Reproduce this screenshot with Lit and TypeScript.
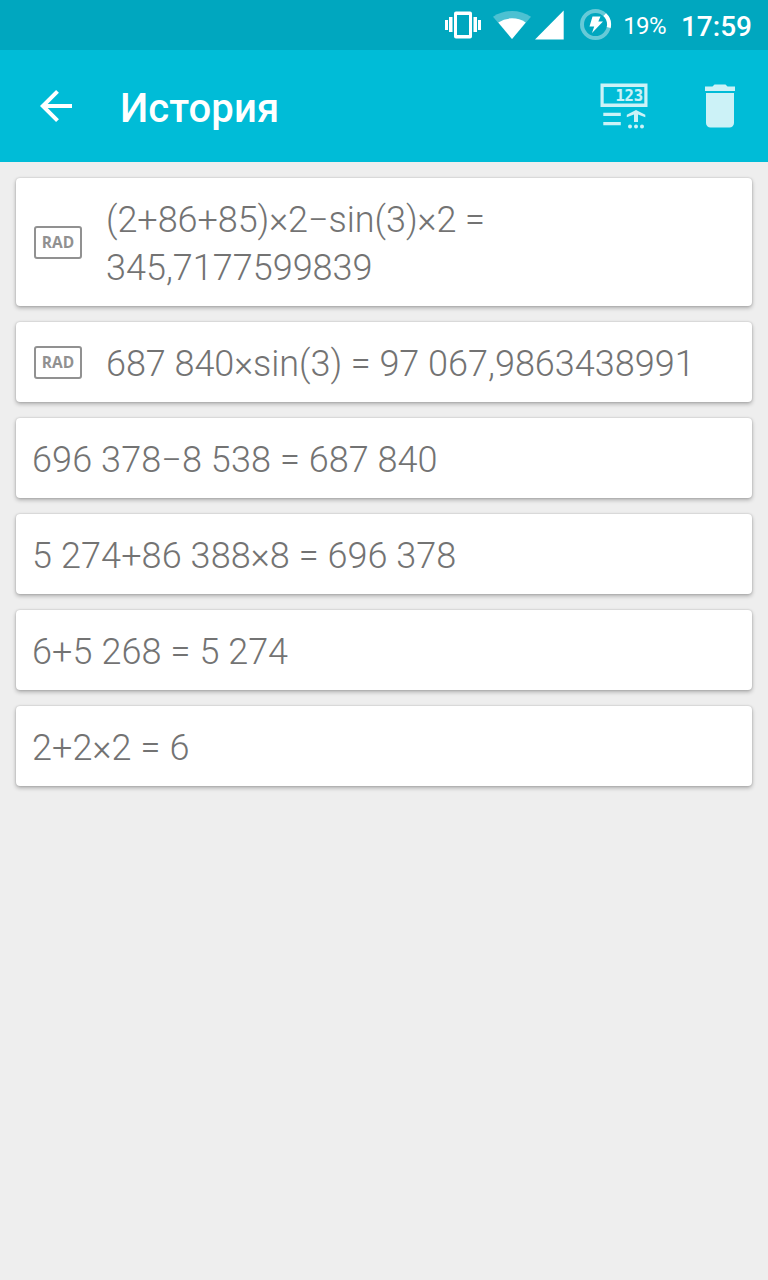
import { LitElement, html, css, nothing } from "lit";
import { customElement, property } from "lit/decorators.js";
import { classMap } from "lit/directives/class-map.js";

interface Entry {
  expression: string;
  result: string;
  rad?: boolean;
}

const ENTRIES: Entry[] = [
  { expression: "(2+86+85)×2−sin(3)×2", result: "345,7177599839", rad: true },
  { expression: "687 840×sin(3)", result: "97 067,9863438991", rad: true },
  { expression: "696 378−8 538", result: "687 840" },
  { expression: "5 274+86 388×8", result: "696 378" },
  { expression: "6+5 268", result: "5 274" },
  { expression: "2+2×2", result: "6" },
];

@customElement("status-bar")
class StatusBar extends LitElement {
  static styles = css`
    :host {
      display: flex;
      align-items: center;
      justify-content: flex-end;
      height: 50px;
      padding-right: 16px;
      background: #00a7bf;
      color: #fff;
    }
    svg { display: block; flex: none; }
    .vibrate { margin-right: 12px; }
    .wifi { margin-right: 4px; }
    .signal { margin-right: 16px; }
    .battery { margin-right: 11px; }
    .percent { font-size: 24px; letter-spacing: -0.6px; margin-right: 15px; padding-top: 2px; height: 48px; display: flex; align-items: center; }
    .clock { font-size: 28px; font-weight: 500; padding-top: 2px; height: 48px; display: flex; align-items: center; }
  `;

  render() {
    return html`
      <svg class="vibrate" width="36" height="50" viewBox="445 0 36 50" fill="#fff">
        <path d="M445 20h3v10h-3zM449 17h3.500v15H449zM473.500 17h3.500v15h-3.500zM478 20h3v10h-3z" />
        <path fill-rule="evenodd" d="M456 11.500h14a2 2 0 0 1 2 2v23a2 2 0 0 1-2 2h-14a2 2 0 0 1-2-2v-23a2 2 0 0 1 2-2zM457 15v20h12V15z" />
      </svg>
      <svg class="wifi" width="38" height="50" viewBox="493 0 38 50" fill="#fff">
        <path opacity=".3" d="M512 39L493 16.700Q502 11 512 11T531 16.700Z" />
        <path d="M512 39L498.300 22.500Q504.500 18.300 512 18.300T525.700 22.500Z" />
      </svg>
      <svg class="signal" width="29" height="50" viewBox="535 0 29 50" fill="#fff">
        <path d="M535 39.500L563.700 10.500V39.500Z" />
      </svg>
      <svg class="battery" width="32" height="50" viewBox="580 0 32 50">
        <circle cx="595.500" cy="24.500" r="13.500" fill="none" stroke="#fff" stroke-opacity=".4" stroke-width="4" />
        <path d="M604.700 14.600A13.500 13.500 0 0 1 608.700 27.500" fill="none" stroke="#fff" stroke-width="4" />
        <path fill="#fff" d="M592.500 16.500H600.500L598.300 21.500H603L592 33L594.200 26.500H589.500Z" />
      </svg>
      <span class="percent">19%</span>
      <span class="clock">17:59</span>
    `;
  }
}

@customElement("app-toolbar")
class AppToolbar extends LitElement {
  static styles = css`
    :host {
      display: flex;
      align-items: center;
      height: 112px;
      padding: 0 32px 0 40px;
      background: #00bcd7;
      color: #fff;
    }
    svg { display: block; flex: none; }
    .title {
      flex: 1;
      margin: 6px 0 0 48px;
      font-size: 40px;
      font-weight: 500;
      line-height: 48px;
      letter-spacing: 0.1px;
    }
    .actions { display: flex; gap: 56px; }
    .digits { font: bold 15.5px "DejaVu Sans Mono", monospace; stroke: #ccf2f7; stroke-width: 0.15px; }
  `;

  render() {
    return html`
      <svg width="32" height="112" viewBox="40 50 32 112">
        <path d="M72 106H43M57.500 91.300L42.800 106L57.500 120.700" fill="none" stroke="#fff" stroke-width="4" />
      </svg>
      <span class="title">История</span>
      <div class="actions">
        <svg width="48" height="112" viewBox="600 50 48 112" fill="#ccf2f7">
          <path fill-rule="evenodd" d="M600.500 83.500H647.500V107H600.500ZM603.700 87V103.500H644.300V87Z" />
          <text class="digits" x="615.400" y="101" textLength="27.6">123</text>
          <path d="M603.300 112.700h17.500v3.300h-17.500zM603.300 122h17.500v3.300h-17.500z" />
          <path d="M636 110L645.300 114.700V117.300L638 114.400V122H634V114.400L626.800 117.300V114.700Z" />
          <circle cx="630" cy="126.600" r="2" /><circle cx="636" cy="126.600" r="2" /><circle cx="642" cy="126.600" r="2" />
        </svg>
        <svg width="32" height="112" viewBox="704 50 32 112" fill="#ccf2f7">
          <path d="M705 86.500h7.500l2-2h11l2 2h7.500v4.500h-30zM706 93h28v30a4.500 4.500 0 0 1-4.500 4.500h-19a4.500 4.500 0 0 1-4.500-4.500z" />
        </svg>
      </div>
    `;
  }
}

@customElement("history-card")
class HistoryCard extends LitElement {
  @property({ attribute: false }) entry!: Entry;

  static styles = css`
    :host {
      display: flex;
      align-items: center;
      padding: 18px 16px 14px;
      border-radius: 4px;
      background: #fff;
      box-shadow: 0 0 2px rgba(0, 0, 0, 0.2), 0 2px 4px rgba(0, 0, 0, 0.28);
    }
    .badge {
      box-sizing: border-box;
      flex: none;
      width: 48px;
      height: 33px;
      margin: -4px 24px 0 2px;
      border: 2px solid #919191;
      border-radius: 3px;
      color: #919191;
      font: bold 15.5px/28px "Open Sans", sans-serif;
      text-align: center;
    }
    .text {
      color: #737373;
      font-size: 36px;
      font-weight: 300;
      line-height: 48px;
    }
    .expression { letter-spacing: 0.1px; }
    .expression.trig { letter-spacing: -0.05px; }
  `;

  render() {
    const { expression, result, rad } = this.entry;
    return html`
      ${rad ? html`<span class="badge">RAD</span>` : nothing}
      <span class="text"><span class=${classMap({ expression: true, trig: !!rad })}>${expression} = </span>${result}</span>
    `;
  }
}

@customElement("app-root")
class AppRoot extends LitElement {
  static styles = css`
    :host {
      display: block;
      min-height: 100vh;
      background: #eee;
      font-family: Roboto, sans-serif;
    }
    .list {
      display: flex;
      flex-direction: column;
      gap: 16px;
      padding: 16px;
    }
  `;

  render() {
    return html`
      <status-bar></status-bar>
      <app-toolbar></app-toolbar>
      <main class="list">
        ${ENTRIES.map((entry) => html`<history-card .entry=${entry}></history-card>`)}
      </main>
    `;
  }
}
